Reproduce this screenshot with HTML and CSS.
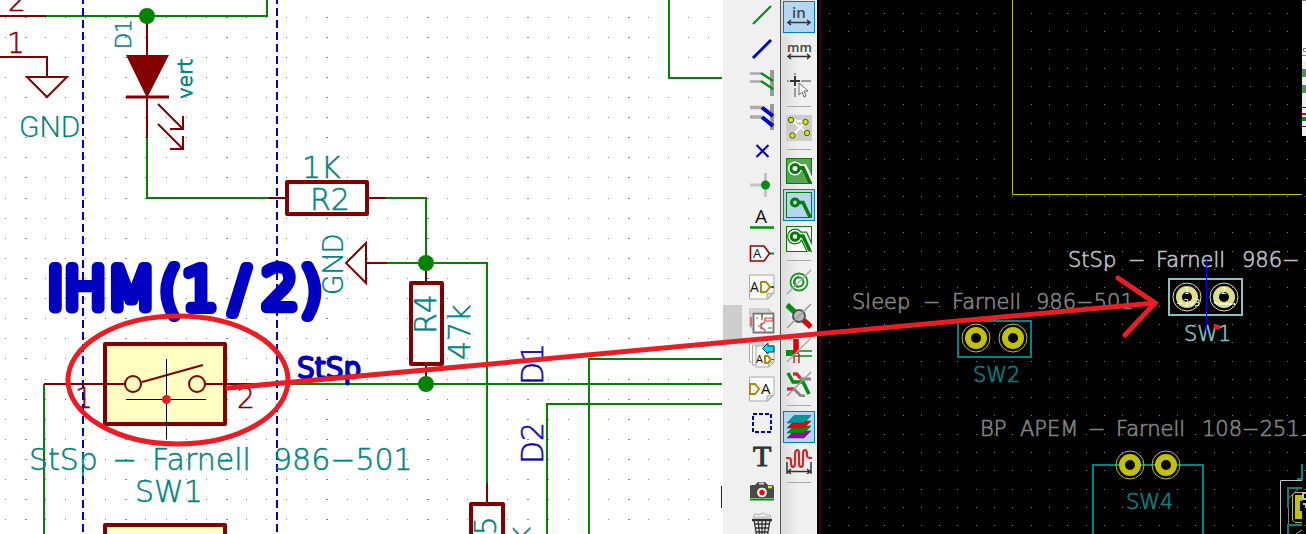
FILE: index.html
```html
<!DOCTYPE html>
<html lang="en">
<head>
<meta charset="utf-8">
<title>Schematic and board editor</title>
<link rel="stylesheet" href="styles.css">
</head>
<body>
<main class="workspace">
  <section class="schematic" aria-label="Schematic">
    <svg class="canvas" viewBox="0 0 723 534">
      <g id="sheet-grid" class="dots"></g>
      <g class="wire">
        <path d="M46 16H267V0M147 138V198H268M386 198H426V263M387 263H487V483M255 384H722M44 534V384M589 534V359H722M547 534V404H722M669 0V78H722"/>
      </g>
      <path class="guide" d="M83 -4V534M277 -4V534"/>
      <g class="part">
        <path d="M0 16H46M0 57H47V77M27 77H67L47 97ZM147 16V56M147 97V138M268 198H287M368 198H386M366 243V283L346 263ZM366 263H387M426 263V283M426 365V384M44 384H105M487 483V504"/>
        <path d="M158 104L183 129M183 116V129H170M158 124L183 149M183 136V149H170"/>
        <path class="solid" d="M126 55H169L147 98Z"/>
        <path class="bar" d="M126 97H169"/>
        <rect class="body" x="287" y="182" width="80" height="32"/>
        <rect class="body" x="411" y="283" width="31" height="81"/>
        <rect class="body" x="471" y="504" width="32" height="50"/>
        <rect class="body filled" x="105" y="344" width="120" height="80"/>
        <rect class="body filled" x="105" y="525" width="120" height="40"/>
        <path d="M105 384H125M205 384H255M142 382L203 365"/>
        <circle cx="133" cy="384" r="8"/>
        <circle cx="197" cy="384" r="8"/>
      </g>
      <g class="junction">
        <circle cx="147" cy="16" r="8"/><circle cx="426" cy="263" r="8"/><circle cx="426" cy="384" r="8"/>
      </g>
      <g class="label pin">
        <text x="8" y="11">2</text><text x="7" y="53">1</text>
        <text x="75" y="408">1</text><text x="237" y="408">2</text>
      </g>
      <g class="label">
        <text class="power" x="19" y="137">GND</text>
        <text x="302" y="178">1K</text>
        <text x="310" y="210">R2</text>
        <text y="470"><tspan x="29">StSp</tspan> <tspan x="112">−</tspan> <tspan x="152">Farnell</tspan> <tspan x="273">986−501</tspan></text>
        <text x="135" y="502">SW1</text>
        <text class="power" transform="translate(343 295) rotate(-90)">GND</text>
        <text transform="translate(436 334) rotate(-90)">R4</text>
        <text transform="translate(470 360) rotate(-90)">47k</text>
        <text transform="translate(496 556) rotate(-90)">R5</text>
        <text transform="translate(530 582) rotate(-90)">47k</text>
        <text class="small" transform="translate(131 49) rotate(-90)">D1</text>
        <text class="small value" transform="translate(192 99) rotate(-90)">vert</text>
      </g>
      <g class="label net">
        <text transform="translate(543 385) rotate(-90)">D1</text>
        <text transform="translate(543 464) rotate(-90)">D2</text>
        <text class="title" y="309"><tspan x="47">IHM</tspan><tspan x="159">(</tspan><tspan x="182">1</tspan><tspan x="230">/</tspan><tspan x="262">2</tspan><tspan x="300">)</tspan></text>
        <text class="subtitle" x="297" y="378">StSp</text>
        <path d="M721.5 486V508"/>
      </g>
      <g class="cross"><path d="M166.500 359V439M126 399.500H206"/><circle cx="166.500" cy="399.500" r="4.500"/></g>
    </svg>
  </section>

  <div class="scroll" aria-hidden="true"><div class="thumb"></div></div>

  <nav class="tools draw" aria-label="Drawing tools">
    <button aria-label="Place wire"><svg viewBox="0 0 26 26"><path d="M4 22L22 4" stroke="#008f12" stroke-width="2.200"/></svg></button>
    <button aria-label="Place bus"><svg viewBox="0 0 26 26"><path d="M4 22L22 4" stroke="#0000cd" stroke-width="3"/></svg></button>
    <button aria-label="Wire to bus entry"><svg viewBox="0 0 26 26"><path d="M23 0V26" stroke="#999" stroke-width="4"/><path d="M1 3.500H12M1 11.500H12" stroke="#aaa" stroke-width="2.500"/><path d="M12 3L24 11M12 11L24 19" stroke="#008f12" stroke-width="2.200"/></svg></button>
    <button aria-label="Bus to bus entry"><svg viewBox="0 0 26 26"><path d="M23 0V26" stroke="#999" stroke-width="4"/><path d="M1 3.500H13M1 13H13" stroke="#aaa" stroke-width="3.500"/><path d="M13 3.500L24 12M13 13L24 22" stroke="#0000cd" stroke-width="4"/></svg></button>
    <button aria-label="No connect"><svg viewBox="0 0 26 26"><path d="M7.500 7L19.500 19M19.500 7L7.500 19" stroke="#0000cd" stroke-width="2"/></svg></button>
    <button aria-label="Junction"><svg viewBox="0 0 26 26"><path d="M1 13H16M16.500 1V25" stroke="#c4c4c4" stroke-width="3"/><circle cx="16.500" cy="13" r="4.500" fill="#008f12"/></svg></button>
    <button aria-label="Net label"><svg viewBox="0 0 26 26"><text x="6" y="17" font-size="19">A</text><path d="M1 21.500H25" stroke="#008f12" stroke-width="2.500"/></svg></button>
    <button aria-label="Global label"><svg viewBox="0 0 26 26"><path d="M20 13.500H25" stroke="#008f12" stroke-width="2"/><path d="M1.500 6H15L20.500 13.500L15 21H1.500Z" fill="#fff" stroke="#900" stroke-width="1.600"/><text x="4" y="18" font-size="13">A</text></svg></button>
    <button aria-label="Hierarchical label"><svg viewBox="0 0 26 26"><path class="page" d="M.5 1H25V19L19 25H.5Z"/><path class="fold" d="M25 19L18 20L18 25Z"/><text x="1" y="18" font-size="14">A</text><path d="M21 13H25" stroke="#008f12" stroke-width="2"/><path class="tag" d="M12 8H17L21 13L17 18H12Z"/></svg></button>
    <button aria-label="Hierarchical sheet"><svg viewBox="0 0 26 26"><path class="page" d="M1 1H20V19H1Z"/><path class="page" d="M3 3H22V21H3Z"/><path d="M4.500 5.500H24.500V24.500H4.500Z" fill="#fff" stroke="#777" stroke-width="1.800"/><path d="M2 9V18M13 5V12M7 10H9M16 10H24V13H16ZM9 18H12M12 15V21M12 17L16 14M12 19L16 22V24" stroke="#d33" stroke-width="1.200"/><path d="M13 6V9M19 20H23" stroke="#008f12"/></svg></button>
    <button aria-label="Import sheet label"><svg viewBox="0 0 26 26"><path class="page" d="M.5 1H14V20H.5Z"/><path class="page" d="M3.500 3H18V23H3.500Z"/><path class="page" d="M7 4H25V20L20 25H7Z"/><path class="fold" d="M25 20L19 20L20 25Z"/><text x="7" y="21" font-size="11">A</text><path d="M21 17.500H25" stroke="#008f12"/><path class="tag" d="M16 14H19L22 17.500L19 21H16Z"/><path d="M13.500 6.500L19 1V4H25V10H19V12Z" fill="#00e0e8" stroke="#035"/></svg></button>
    <button aria-label="Sheet pin"><svg viewBox="0 0 26 26"><path class="page" d="M.5 1H25V19L19 25H.5Z"/><path class="fold" d="M25 19L18 20L18 25Z"/><path class="tag" d="M1 8H6L10 13L6 18H1Z"/><text x="12" y="18" font-size="15">A</text></svg></button>
    <button aria-label="Graphic line"><svg viewBox="0 0 26 26"><rect x="4" y="4" width="18" height="18" stroke="#0000cd" stroke-width="2" stroke-dasharray="4 2"/></svg></button>
    <button aria-label="Text"><svg viewBox="0 0 26 26"><text class="serif" x="4" y="22" font-size="30">T</text></svg></button>
    <button aria-label="Image"><svg viewBox="0 0 26 26"><path d="M1 8Q1 7 3 7H6L9 4H16L19 7H23Q25 7 25 9V20H1Z" fill="#4a4a4a"/><path d="M10 5.500H15" stroke="#ccc" stroke-width="2"/><path d="M1 21.500H25" stroke="#008f12" stroke-width="2"/><circle cx="13" cy="14.500" r="5.500" fill="#eee" stroke="#333"/><circle cx="13" cy="14.500" r="2.700" fill="#f00"/><path d="M19 9H23" stroke="#ee0" stroke-width="2.500"/></svg></button>
    <button aria-label="Delete"><svg viewBox="0 0 26 26"><path d="M4 5L6 2L10 3L14 1L17 3L21 3L22 5Z" fill="#fff" stroke="#aaa"/><path d="M3 8H23" stroke="#333" stroke-width="2.500"/><path d="M5 8L8 26H18L21 8M9 8L11 26M13 8V26M17 8L15 26M6 12H20M6 16H20M7 20H19M8 24H18" stroke="#333" stroke-width="1.300"/></svg></button>
  </nav>

  <nav class="tools options" aria-label="Board options">
    <button class="on" aria-label="Inches"><svg viewBox="0 0 26 26"><text class="unit" x="6" y="14" font-size="15">in</text><path class="arrow" d="M2 18.500H24M5 16L2 18.500L5 21M21 16L24 18.500L21 21"/></svg></button>
    <button aria-label="Millimetres"><svg viewBox="0 0 26 26"><text class="unit" x="1" y="14" font-size="13">mm</text><path class="arrow" d="M2 18.500H24M5 16L2 18.500L5 21M21 16L24 18.500L21 21"/></svg></button>
    <button aria-label="Cursor shape"><svg viewBox="0 0 26 26"><path d="M1 9H3M15 9H25M9 1V3M9 16V25" stroke="#999" stroke-width="2"/><path d="M4 9H14M9 4V14" stroke="#333" stroke-width="2"/><path d="M13 11V23L16 20L18 25L20 24L18 19H22Z" fill="#fff" stroke="#666"/></svg></button>
    <hr>
    <button aria-label="Show ratsnest"><svg viewBox="0 0 26 26"><rect width="26" height="26" rx="1" fill="#ccc"/><path d="M5 5L21 18M19.500 7L6.500 20.500M5 5L19.500 7" stroke="#fff" stroke-width="2"/><g fill="#d5e800" stroke="#552"><circle cx="5" cy="5" r="2.700"/><circle cx="19.500" cy="7" r="2.700"/><circle cx="6.500" cy="20.500" r="2.700"/><circle cx="21" cy="18" r="2.700"/></g></svg></button>
    <hr>
    <button aria-label="Show filled zones"><svg viewBox="0 0 26 26"><rect x=".5" y=".5" width="25" height="25" fill="#54a654" stroke="#087a08"/><path d="M9 9.500H18L25 24" stroke="#fff" stroke-width="6.500"/><circle cx="9" cy="10.500" r="7" fill="#fff"/><path d="M9 10H17L24 25" stroke="#087a08" stroke-width="4"/><circle cx="9" cy="10.500" r="4" fill="#fff" stroke="#087a08" stroke-width="3"/></svg></button>
    <button class="on" aria-label="Hide zones"><svg viewBox="0 0 26 26"><rect x=".5" y=".5" width="25" height="25" stroke="#087a08"/><path d="M11 10.500H17L24 25" stroke="#087a08" stroke-width="3.500"/><circle cx="9" cy="10.500" r="3.500" stroke="#087a08" stroke-width="3"/></svg></button>
    <button aria-label="Zone outlines"><svg viewBox="0 0 26 26"><rect x=".5" y=".5" width="25" height="25" fill="#fff" stroke="#087a08"/><path d="M9 10H18L25 25" stroke="#087a08" stroke-width="9"/><circle cx="9" cy="10.500" r="8" fill="#087a08"/><path d="M9 10H18L25 25" stroke="#fff" stroke-width="6.500"/><circle cx="9" cy="10.500" r="6.800" fill="#fff"/><path d="M11 10H17L24 25" stroke="#087a08" stroke-width="3.500"/><circle cx="9" cy="10.500" r="3.800" stroke="#087a08" stroke-width="3"/></svg></button>
    <hr>
    <button aria-label="Pad sketch"><svg viewBox="0 0 26 26"><circle cx="13" cy="13" r="8.500" fill="#fff" stroke="#189a28" stroke-width="1.800"/><path d="M13 7A6 6 0 0 0 7 13A6 6 0 0 0 13 19" fill="#189a28"/><circle cx="13" cy="13" r="4.500" fill="#fff" stroke="#189a28" stroke-width="2.200"/><path d="M1 25L25 1" stroke="#aaa" stroke-width="1.500"/></svg></button>
    <button aria-label="Via sketch"><svg viewBox="0 0 26 26"><path d="M1 2L13 13" stroke="#008f12" stroke-width="5.500"/><path d="M13 13L25 24" stroke="#e00000" stroke-width="5.500"/><circle cx="13" cy="13" r="6" fill="#bbb" stroke="#555" stroke-width="2"/><path d="M10 12H14V16Z" fill="#dc0"/><path d="M1 25L25 1" stroke="#999" stroke-width="1.500"/></svg></button>
    <button aria-label="Track sketch"><svg viewBox="0 0 26 26"><path d="M0 16H8" stroke="#008f12" stroke-width="6"/><path d="M8 14H26M8 19H26" stroke="#008f12" stroke-width="1.300"/><path d="M10 2V17" stroke="#e00000" stroke-width="5.500"/><path d="M8 17V26M13 17V26" stroke="#e00000" stroke-width="1.300"/><path d="M1 25L25 1" stroke="#aaa" stroke-width="1.500"/></svg></button>
    <button aria-label="High contrast"><svg viewBox="0 0 26 26"><path d="M7 3H11L15 8H25M1 18H8L15 25H19" stroke="#888" stroke-width="3"/><path d="M7 3H11L14 7M1 18H8" stroke="#e0202a" stroke-width="3"/><path d="M2 2L7 11H17L23 23" stroke="#008f12" stroke-width="3.500"/><path d="M1 25L25 1" stroke="#999" stroke-width="1.500"/></svg></button>
    <hr>
    <button class="on" aria-label="Layers manager"><svg viewBox="0 0 26 26"><g stroke="#444" stroke-width=".6"><path d="M8 17H25L18 24H1Z" fill="#a000a0"/><path d="M8 12H25L18 19H1Z" fill="#00930b"/><path d="M8 7H25L18 14H1Z" fill="#f00000"/><path d="M8 1.500H25L18 9H1Z" fill="#00989a"/></g></svg></button>
    <button aria-label="Microwave tools"><svg viewBox="0 0 26 26"><path d="M0 10H3Q5 10 5 13V15Q5 19 7 19Q9 19 9 15V6Q9 2 11.500 2Q13 2 13 6V15Q13 19 15 19Q17 19 17 15V6Q17 2 19 2Q21 2 21 6V8Q21 10 26 10" stroke="#d02828" stroke-width="2.200"/><path class="arrow" d="M1 14V26M25 14V26M2 23.500H24M5 21L2 23.500L5 26M21 21L24 23.500L21 26"/></svg></button>
    <hr>
  </nav>

  <section class="board" aria-label="Board">
    <svg class="canvas" viewBox="818 0 488 534">
      <path d="M820 0V534" stroke="#400000" stroke-width="2"/>
      <g id="board-grid" class="dots"></g>
      <path class="edge" d="M1012.500 0V194.500H1302"/>
      <g class="silk">
        <rect x="958" y="321" width="73" height="36"/>
        <path d="M1093 534V465H1203V534"/>
        <rect class="lit" x="1169" y="279" width="73" height="36"/>
      </g>
      <g id="pads">
        <g class="pad"><circle class="land" cx="976" cy="338" r="8"/><circle cx="976" cy="338" r="14"/></g>
        <g class="pad"><circle class="land" cx="1013" cy="338" r="8"/><circle cx="1013" cy="338" r="14"/></g>
        <g class="pad"><circle class="land" cx="1130" cy="465" r="8"/><circle cx="1130" cy="465" r="14"/></g>
        <g class="pad"><circle class="land" cx="1166" cy="465" r="8"/><circle cx="1166" cy="465" r="14"/></g>
        <g class="pad lit"><circle class="land" cx="1187" cy="297" r="8"/><circle cx="1187" cy="297" r="14"/></g>
        <g class="pad lit"><circle class="land" cx="1224" cy="297" r="8"/><circle cx="1224" cy="297" r="14"/></g>
      </g>
      <g class="print">
        <text y="309"><tspan x="852">Sleep</tspan> <tspan x="923">−</tspan> <tspan x="952">Farnell</tspan> <tspan x="1036">986−501</tspan></text>
        <text y="436"><tspan x="980">BP</tspan> <tspan x="1020">APEM</tspan> <tspan x="1088">−</tspan> <tspan x="1116">Farnell</tspan> <tspan x="1202">108−251</tspan></text>
        <text class="bright" y="267"><tspan x="1068">StSp</tspan> <tspan x="1128">−</tspan> <tspan x="1156">Farnell</tspan> <tspan x="1242">986−</tspan></text>
        <text class="teal" x="973" y="382">SW2</text>
        <text class="teal" x="1126" y="509">SW4</text>
        <text class="aqua" x="1184" y="341">SW1</text>
        <text class="tiny" x="1184" y="294">1</text><text class="tiny" x="1221" y="294">2</text>
        <text class="tiny" x="1176" y="306">+3v3</text>
      </g>
      <path d="M1214 302L1217 304H1235" stroke="#fff" stroke-width="2" stroke-dasharray="4 1" fill="none"/>
      <path d="M1206.500 260V332" stroke="#0000f0"/>
      <ellipse cx="1217" cy="327" rx="3.500" ry="2.500" fill="#ed1c24"/>
      <g fill="none">
        <path d="M1280.500 534V480.500H1302" stroke="#c2c2c2"/>
        <path d="M1302 464V479H1297M1302 488H1288V508M1302 525H1288V534" stroke="#008484" stroke-width="2"/>
        <path d="M1288.500 508V524M1289 498L1298 489" stroke="#848484"/>
        <path d="M1302 492.500H1295L1292.500 495V520L1295 522.500H1302M1302 435.500H1306M1302 530L1296 534" stroke="#c2c200"/>
        <path d="M1295 495H1302V501H1300V511H1302V519H1295Z" fill="#c2c200"/>
        <path d="M1306 493H1303V499H1306M1303 504H1306V508" stroke="#c2c2c2" stroke-width="2"/>
      </g>
      <g>
        <path d="M1302 0H1306V61H1302Z" fill="#fff"/><path d="M1302 61H1306V136H1302Z" fill="#f0f0f0"/>
        <path d="M1302 69H1306V77H1302ZM1302 85H1306V93H1302Z" fill="#6a8a6a"/>
        <path d="M1303 71H1306V75H1303ZM1303 87H1306V91H1303Z" fill="#00c030"/>
        <path d="M1306 48.500H1303.500V51.500H1306M1302 55.500H1306M1302 .5H1306" stroke="#888" fill="none"/>
        <path d="M1302 107.500H1306M1302 126.500H1306" stroke="#222"/>
        <path d="M1302 113H1306V115H1302Z" fill="#e00000"/><path d="M1302 117H1306V121H1302Z" fill="#009010"/>
      </g>
    </svg>
  </section>

  <svg class="notes" viewBox="0 0 1306 534" aria-hidden="true">
    <ellipse cx="178" cy="380" rx="110" ry="64"/>
    <path d="M228 388L1155 303M1118 278L1155 303L1125 335"/>
  </svg>
</main>
<script src="grid.js"></script>
</body>
</html>
```

FILE: styles.css
```css
* { box-sizing: border-box; }
body { margin: 0; background: #000; font-family: "DejaVu Sans", sans-serif; }

.workspace {
  position: relative;
  display: grid;
  grid-template-columns: 723fr 19px 39px 37px 488fr;
  height: 100vh;
  overflow: hidden;
}
.schematic { background: #fff; min-width: 0; overflow: hidden; }
.board { background: #000; min-width: 0; overflow: hidden; }
.canvas { display: block; width: 100%; height: 100%; }

.dots { fill: #848484; shape-rendering: crispEdges; }
.wire { fill: none; stroke: #008400; stroke-width: 2; }
.guide { stroke: #0000c2; stroke-width: 2; stroke-dasharray: 8 4; }
.part { fill: none; stroke: #840000; stroke-width: 2; }
.part .solid { fill: #840000; stroke: none; }
.part .bar { stroke-width: 3; }
.part .body { stroke-width: 4; fill: #fff; stroke-linejoin: round; }
.part .filled { fill: #ffffc2; }
.junction { fill: #008400; }

.label { font-size: 30px; font-weight: 200; fill: #008484; stroke: #008484; stroke-width: 0.5; }
.label .small { font-size: 21px; }
.label .value { font-size: 20px; stroke-width: 1; }
.label .power { font-family: Roboto, sans-serif; font-weight: 300; stroke-width: 0; }
.label.pin { font-size: 28px; fill: #840000; stroke: #840000; }
.label.net { fill: #0000c2; stroke: #0000c2; }
.net path { stroke-width: 1; }
.label .title { font-size: 57px; stroke-width: 10; stroke-linejoin: round; stroke-linecap: round; }
.label .subtitle { font-size: 28px; stroke-width: 3; stroke-linejoin: round; }
.cross { stroke: #000; stroke-width: 1; }
.cross circle { fill: #ed1c24; stroke: none; }

.scroll { background: #f0f0f0; padding-top: 305px; }
.thumb { height: 39px; background: #cdcdcd; }

.tools { display: flex; flex-direction: column; overflow: hidden; background: #f0f0f0; }
.draw { padding-left: 4px; margin-top: -2px; border-right: 1px solid #555; }
.options { padding: 0 3px 0 2px; background: linear-gradient(90deg, #dcdcdc, #f0f0f0 50%); border-right: 1px solid #000; }
.tools button {
  display: grid;
  place-items: center;
  flex: none;
  width: 32px;
  height: 32px;
  margin: 1px 0;
  padding: 0;
  border: 1px solid transparent;
  background: transparent;
}
.tools button.on { background: #b3d7f3; border-color: #0078d7; }
.tools svg { display: block; width: 26px; height: 26px; fill: none; }
.tools text { fill: #111; font-family: "Open Sans", sans-serif; }
.tools .unit { fill: #444; font-weight: 600; }
.tools .serif { font-family: "Liberation Serif", serif; font-weight: 400; fill: #333; stroke: #333; stroke-width: 1; }
.tools .page { fill: #fafafa; stroke: #aaa; }
.tools .fold { fill: #ddd; stroke: #aaa; }
.tools .tag { fill: #fff; stroke: #b08a00; stroke-width: 2; }
.tools .arrow { stroke: #333; stroke-width: 1.5; }
.tools hr { flex: none; width: 24px; height: 1px; margin: 4px 4px; border: 0; background: #aaa; }

.edge { fill: none; stroke: #c2c200; }
.silk { fill: none; stroke: #008484; stroke-width: 2; }
.silk .lit { stroke: #84c2c2; }
.pad { fill: none; stroke: #c2c200; stroke-width: 1; }
.pad .land { fill: #000; stroke-width: 6; }
.pad.lit { stroke: #dede84; }
.print { font-size: 21px; font-weight: 200; fill: #848484; stroke: #848484; stroke-width: 0.6; }
.print .bright { fill: #c2c2c2; stroke: #c2c2c2; }
.print .teal { fill: #008484; stroke: #008484; }
.print .aqua { fill: #84c2c2; stroke: #84c2c2; }
.print .tiny { font-size: 9px; font-weight: 400; fill: #fff; stroke: none; }

.notes {
  position: absolute;
  inset: 0;
  width: 100%;
  height: 100%;
  fill: none;
  stroke: #ed1c24;
  stroke-width: 5;
  stroke-linecap: round;
  pointer-events: none;
}
```

FILE: grid.js
```js
function drawGrid(id, left, top, right, bottom, step, major) {
  const group = document.getElementById(id);
  const ns = "http://www.w3.org/2000/svg";
  let column = 0;
  for (let x = left; x < right; x += step, column++) {
    for (let y = top; y < bottom; y += step) {
      const dot = document.createElementNS(ns, "rect");
      dot.setAttribute("x", Math.floor(x));
      dot.setAttribute("y", Math.floor(y));
      dot.setAttribute("width", major && column % major === 1 ? 2 : 1);
      dot.setAttribute("height", 1);
      group.appendChild(dot);
    }
  }
}
drawGrid("sheet-grid", 5.3, 17.2, 722, 534, 20.1, 5);
drawGrid("board-grid", 829.9, 13.3, 1306, 534, 18.3, 0);
```
